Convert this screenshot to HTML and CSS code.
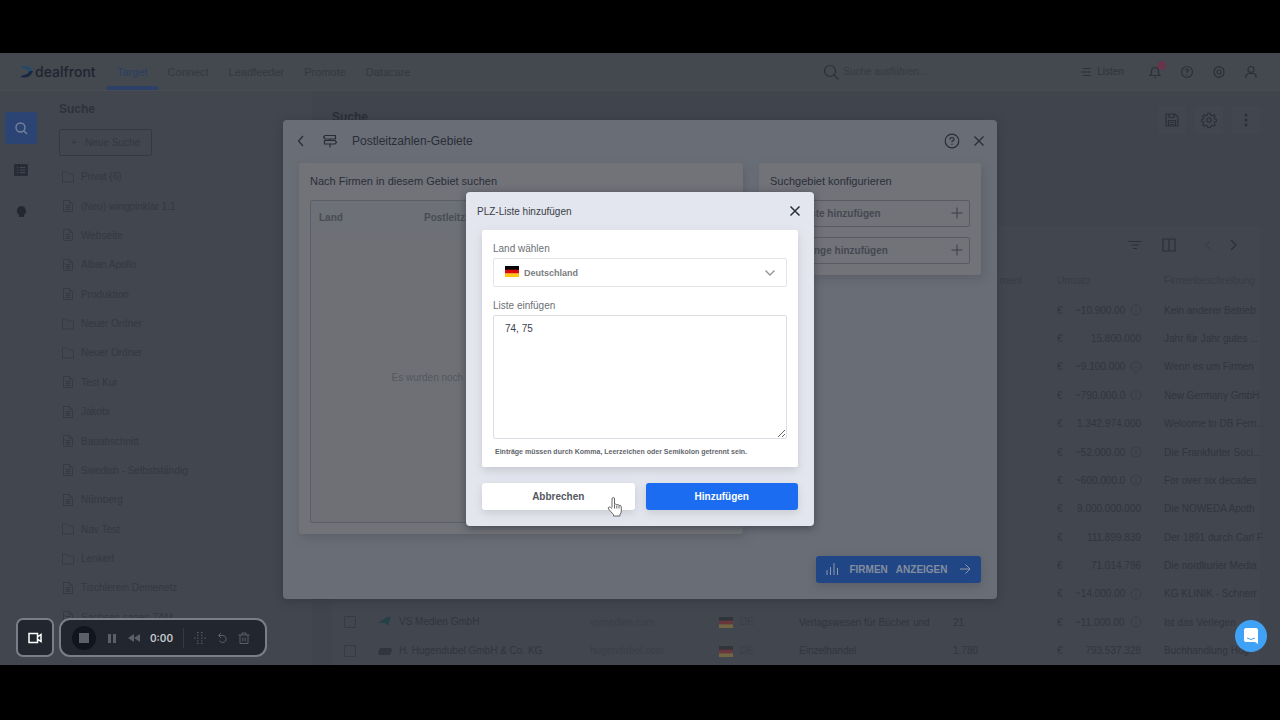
FILE: index.html
```html
<!DOCTYPE html>
<html lang="de">
<head>
    <meta charset="UTF-8">
    <meta name="viewport" content="width=device-width, initial-scale=1.0">
    <title>Dealfront - Target</title>
    <link rel="stylesheet" href="styles.css">
</head>
<body>
    <svg class="sprite" aria-hidden="true">
        <symbol id="i-folder" viewBox="0 0 14 14"><path d="M1.500 12V2h4l1.500 2h5.500v8z"/></symbol>
        <symbol id="i-doc" viewBox="0 0 14 14"><path d="M2.500 1.500h6l3 3v8h-9zM8.500 1.500v3h3M4.500 6.500h5M4.500 8.500h5M4.500 10.500h5M7 6.500v4"/></symbol>
        <symbol id="i-info" viewBox="0 0 14 14"><circle cx="7" cy="7" r="5"/><path d="M7 6v4M7 4v1"/></symbol>
        <symbol id="i-close" viewBox="0 0 14 14"><path d="M2.500 2.500l9 9M11.500 2.500l-9 9"/></symbol>
        <symbol id="i-plus" viewBox="0 0 14 14"><path d="M7 1.500v11M1.500 7h11"/></symbol>
        <symbol id="i-flag" viewBox="0 0 14 11"><path fill="#000" d="M0 0h14v4H0z"/><path fill="#d80a0a" d="M0 3.700h14v4H0z"/><path fill="#ffc61a" d="M0 7.400h14V11H0z"/></symbol>
    </svg>

    <div class="app">
        <header class="topbar">
            <a href="#" class="logo">
                <svg width="14" height="14" viewBox="0 0 14 14"><path fill="#22496b" d="M1 1h5q4 .5 7 5l-3 2Q7 3.500 3 3z"/><path fill="#1b2742" d="M13 6q-2 5.500-7 6.500H1q0-2 3-2.500 4-1 6-4z"/></svg>
                dealfront
            </a>
            <nav class="nav">
                <a href="#" class="active">Target</a>
                <a href="#">Connect</a>
                <a href="#">Leadfeeder</a>
                <a href="#">Promote</a>
                <a href="#">Datacare</a>
            </nav>
            <label class="search">
                <svg class="icon" width="16" height="16" viewBox="0 0 16 16"><circle cx="7" cy="7" r="5.500"/><path d="M11 11l4.500 4.500"/></svg>
                <input type="text" placeholder="Suche ausführen..." aria-label="Suche">
            </label>
            <div class="tools">
                <a href="#" class="lists"><svg class="icon" width="12" height="12" viewBox="0 0 12 12"><path d="M3 2.500h8M1 6h10M3 9.500h8"/></svg>Listen</a>
                <button class="bell" aria-label="Benachrichtigungen"><svg class="icon" width="14" height="14" viewBox="0 0 14 14"><path d="M2 10.500h10l-1.500-2V6a3.500 3.500 0 0 0-7 0v2.500zM6 12.500h2"/></svg><span class="badge"></span></button>
                <button aria-label="Hilfe"><svg class="icon" width="14" height="14" viewBox="0 0 14 14"><circle cx="7" cy="7" r="5.500"/><path d="M5.500 5.500q0-1.500 1.500-1.500t1.500 1.500L7 7v1M7 9.500v1"/></svg></button>
                <button aria-label="Einstellungen"><svg class="icon" width="14" height="14" viewBox="0 0 14 14"><path d="M4.500 2.500L7 1.500l2.500 1 2 1.500.5 3-.5 3-2 1.500-2.500 1-2.500-1-2-1.500L2 7l.5-3z"/><circle cx="7" cy="7" r="2"/></svg></button>
                <button aria-label="Konto"><svg class="icon" width="14" height="14" viewBox="0 0 14 14"><circle cx="7" cy="4.500" r="3"/><path d="M2 13V10.500l2-2h6l2 2V13"/></svg></button>
            </div>
        </header>

        <div class="workspace">
            <nav class="rail">
                <a href="#" class="active" aria-label="Suche"><svg width="14" height="14" viewBox="0 0 14 14"><circle cx="6.500" cy="6.500" r="4.500"/><path d="M10 10l3 3"/></svg></a>
                <a href="#" aria-label="Listen"><svg width="14" height="14" viewBox="0 0 14 14"><rect x="0" y="1" width="14" height="12" rx="1" fill="#282c36"/><path d="M3 4h1v1H3zM3 6.500h1v1H3zM3 9h1v1H3zM6 4h5v1H6zM6 6.500h5v1H6zM6 9h5v1H6z" fill="#454952"/></svg></a>
                <a href="#" aria-label="Ideen"><svg width="12" height="14" viewBox="0 0 12 14"><path fill="#242832" d="M6 1a5 5 0 0 1 3 9v2H4v-2a5 5 0 0 1 2-9z"/></svg></a>
            </nav>

            <aside class="sidebar">
                <h2>Suche</h2>
                <button class="new-search">+ &nbsp; Neue Suche</button>
                <ul>
                    <li><svg><use href="#i-folder"/></svg>Privat (6)</li>
                    <li><svg><use href="#i-doc"/></svg>(Neu) wingpinklar 1.1</li>
                    <li><svg><use href="#i-doc"/></svg>Webseite</li>
                    <li><svg><use href="#i-doc"/></svg>Alban Apollo</li>
                    <li><svg><use href="#i-doc"/></svg>Produktion</li>
                    <li><svg><use href="#i-folder"/></svg>Neuer Ordner</li>
                    <li><svg><use href="#i-folder"/></svg>Neuer Ordner</li>
                    <li><svg><use href="#i-doc"/></svg>Test Kur</li>
                    <li><svg><use href="#i-doc"/></svg>Jakobi</li>
                    <li><svg><use href="#i-doc"/></svg>Bauabschnitt</li>
                    <li><svg><use href="#i-doc"/></svg>Swedish - Selbstständig</li>
                    <li><svg><use href="#i-doc"/></svg>Nürnberg</li>
                    <li><svg><use href="#i-folder"/></svg>Nav Test</li>
                    <li><svg><use href="#i-folder"/></svg>Lenkert</li>
                    <li><svg><use href="#i-doc"/></svg>Tischlerein Demenetz</li>
                    <li><svg><use href="#i-doc"/></svg>Sachsen sagen TAM</li>
                </ul>
            </aside>

            <main class="results">
                <div class="results-head">
                    <h1>Suche</h1>
                    <div class="actions">
                        <button aria-label="Speichern"><svg class="icon" width="16" height="16" viewBox="0 0 16 16"><path d="M2 2h9l3 3v9H2zM5 2v3.500h5V2M4.500 14V8.500h7V14M6 10.500h4M6 12.500h4"/></svg></button>
                        <button aria-label="Optionen"><svg class="icon" width="16" height="16" viewBox="0 0 18 18"><path d="M7.500 1.500h3l.5 2 1.500.7 1.900-1.100 1.500 1.500-1 2 .6 1.400 2 .5v2l-2 .5-.6 1.400 1 2-1.500 1.500-1.900-1-1.500.6-.5 2h-3l-.5-2-1.500-.6-1.900 1-1.500-1.500 1-2L2.500 11l-2-.5v-2l2-.5.6-1.400-1-2 1.500-1.500 1.900 1.100L7 3.500z"/><circle cx="9" cy="9" r="2.500"/></svg></button>
                        <button aria-label="Mehr"><svg width="16" height="16" viewBox="0 0 16 16" fill="#2b2f39"><circle cx="8" cy="3" r="1.500"/><circle cx="8" cy="8" r="1.500"/><circle cx="8" cy="13" r="1.500"/></svg></button>
                    </div>
                </div>
                <div class="panel">
                    <div class="toolbar">
                        <button aria-label="Filter"><svg class="icon" width="14" height="14" viewBox="0 0 14 14"><path d="M.5 3.500h13M3 7h8M5 10.500h4"/></svg></button>
                        <button aria-label="Spalten"><svg class="icon" width="14" height="14" viewBox="0 0 14 14"><path d="M1 1h12v12H1zM7 1v12"/></svg></button>
                        <button class="prev" aria-label="Zurück"><svg class="icon" width="14" height="14" viewBox="0 0 14 14"><path d="M9 3L5 7l4 4"/></svg></button>
                        <button aria-label="Weiter"><svg class="icon" width="14" height="14" viewBox="0 0 14 14"><path d="M5 2l5 5-5 5"/></svg></button>
                    </div>
                    <div class="table-wrap">
                        <table>
                            <colgroup>
                                <col class="c-check"><col class="c-name"><col class="c-domain"><col class="c-land"><col class="c-branch"><col class="c-staff"><col class="c-cur"><col class="c-sales"><col class="c-info"><col>
                            </colgroup>
                            <thead>
                                <tr><th colspan="5"></th><th class="staff-head">ment</th><th colspan="3">Umsatz</th><th>Firmenbeschreibung</th></tr>
                            </thead>
                            <tbody>
                                <tr><td colspan="6"></td><td>€</td><td>~10.900.00</td><td><svg><use href="#i-info"/></svg></td><td>Kein anderer Betrieb</td></tr>
                                <tr><td colspan="6"></td><td>€</td><td colspan="2" class="num">15.800.000</td><td>Jahr für Jahr gutes ...</td></tr>
                                <tr><td colspan="6"></td><td>€</td><td>~9.100.000</td><td><svg><use href="#i-info"/></svg></td><td>Wenn es um Firmen</td></tr>
                                <tr><td colspan="6"></td><td>€</td><td>~790.000.0</td><td><svg><use href="#i-info"/></svg></td><td>New Germany GmbH</td></tr>
                                <tr><td colspan="6"></td><td>€</td><td colspan="2" class="num">1.342.974.000</td><td>Welcome to DB Fern...</td></tr>
                                <tr><td colspan="6"></td><td>€</td><td>~52.000.00</td><td><svg><use href="#i-info"/></svg></td><td>Die Frankfurter Soci...</td></tr>
                                <tr><td colspan="6"></td><td>€</td><td>~600.000.0</td><td><svg><use href="#i-info"/></svg></td><td>For over six decades</td></tr>
                                <tr><td colspan="6"></td><td>€</td><td colspan="2" class="num">9.000.000.000</td><td>Die NOWEDA Apoth</td></tr>
                                <tr><td colspan="6"></td><td>€</td><td colspan="2" class="num">111.899.839</td><td>Der 1891 durch Carl F</td></tr>
                                <tr><td colspan="6"></td><td>€</td><td colspan="2" class="num">71.014.796</td><td>Die nordkurier Media</td></tr>
                                <tr><td colspan="6"></td><td>€</td><td>~14.000.00</td><td><svg><use href="#i-info"/></svg></td><td>KG KLINIK - Schnerr</td></tr>
                                <tr><td><input type="checkbox" aria-label="VS Medien GmbH"></td><td><svg class="brand"><path d="M0 8l9-6h4l-3 9-3-3z"/></svg>VS Medien GmbH</td><td class="faint">vsmedien.com</td><td class="faint"><svg class="flag"><use href="#i-flag"/></svg>DE</td><td>Verlagswesen für Bücher und</td><td>21</td><td>€</td><td>~11.000.00</td><td><svg><use href="#i-info"/></svg></td><td>Ist das Verlegen</td></tr>
                                <tr><td><input type="checkbox" aria-label="H. Hugendubel GmbH &amp; Co. KG"></td><td><svg class="brand dark"><path d="M0 9l2-5h11l1 2-2 5H1z"/></svg>H. Hugendubel GmbH &amp; Co. KG</td><td class="faint">hugendubel.com</td><td class="faint"><svg class="flag"><use href="#i-flag"/></svg>DE</td><td>Einzelhandel</td><td>1.780</td><td>€</td><td colspan="2" class="num">793.537.328</td><td>Buchhandlung Hug</td></tr>
                            </tbody>
                        </table>
                    </div>
                </div>
            </main>
        </div>

        <!-- area picker -->
        <div class="overlay">
            <section class="modal">
                <header>
                    <button aria-label="Zurück"><svg class="icon" width="14" height="14" viewBox="0 0 14 14"><path d="M9 2L4.500 7 9 12"/></svg></button>
                    <svg class="icon" width="14" height="14" viewBox="0 0 14 14"><path d="M2 1.500h10.500v3.500H2L.5 3.200zM1.500 6.500H12l1.500 1.800L12 10H1.500zM7 5v1.500M7 10v3.500"/></svg>
                    <h2>Postleitzahlen-Gebiete</h2>
                    <button aria-label="Hilfe"><svg class="icon" width="16" height="16" viewBox="0 0 16 16"><circle cx="8" cy="8" r="6.800"/><path d="M6 6.500Q6 4.500 8 4.500t2 2Q10 7.500 8 8.300v1M8 10.800v1"/></svg></button>
                    <button aria-label="Schließen"><svg class="icon" width="14" height="14"><use href="#i-close"/></svg></button>
                </header>
                <div class="columns">
                    <div class="card">
                        <h3>Nach Firmen in diesem Gebiet suchen</h3>
                        <div class="area-list">
                            <div class="area-head"><span>Land</span><span>Postleitzahl</span></div>
                            <p>Es wurden noch keine Postleitzahlen-Gebiete hinzugefügt.</p>
                        </div>
                    </div>
                    <div class="card">
                        <h3>Suchgebiet konfigurieren</h3>
                        <button class="add">PLZ-Liste hinzufügen<svg width="14" height="14"><use href="#i-plus"/></svg></button>
                        <button class="add">PLZ-Range hinzufügen<svg width="14" height="14"><use href="#i-plus"/></svg></button>
                    </div>
                </div>
                <footer>
                    <button class="show"><svg width="14" height="14" viewBox="0 0 14 14"><path d="M2 8v5M5.500 5v8M9 1v12M12.500 6v7"/></svg><span>FIRMEN</span><span>ANZEIGEN</span><svg width="14" height="14" viewBox="0 0 14 14"><path d="M2 7h10M7.500 2.500L12 7l-4.500 4.500"/></svg></button>
                </footer>
            </section>
        </div>

        <!-- add a list of postcodes -->
        <div class="overlay">
            <form class="dialog">
                <header>
                    <h2>PLZ-Liste hinzufügen</h2>
                    <button type="button" aria-label="Schließen"><svg class="icon" width="14" height="14"><use href="#i-close"/></svg></button>
                </header>
                <div class="fields">
                    <label for="land">Land wählen</label>
                    <div class="select">
                        <select id="land"><option>Deutschland</option></select>
                        <svg class="flag"><use href="#i-flag"/></svg>
                        <svg class="chevron" width="12" height="12" viewBox="0 0 12 12"><path d="M1.500 3.500L6 8l4.500-4.500"/></svg>
                    </div>
                    <label for="liste">Liste einfügen</label>
                    <textarea id="liste">74, 75</textarea>
                    <small>Einträge müssen durch Komma, Leerzeichen oder Semikolon getrennt sein.</small>
                </div>
                <div class="buttons">
                    <button type="button">Abbrechen</button>
                    <button type="button" class="primary">Hinzufügen</button>
                </div>
                <svg class="cursor" width="16" height="22" viewBox="0 0 16 22"><path d="M5 11.500V3q0-1.500 1.300-1.500T7.500 3v5.500q1.200-1 2.300.3 1.200-.8 2.200.5 2-.3 2.300 1.700v4q0 2-1.300 3.500v1.500H6.500v-1.500Q4 16 1.500 13q-.8-1.600.7-2 1.300-.2 2.800 1.700M7.500 9v3.500M9.800 9.500v3M12 10v2.500" fill="#fff" stroke="#666" stroke-width="1"/></svg>
            </form>
        </div>

        <div class="recorder">
            <button class="camera" aria-label="Kamera"><svg width="14" height="12" viewBox="0 0 14 12"><path d="M1 1.500h8.500v9H1zM9.500 5L13 2.500v7L9.500 7" fill="none" stroke="#fff" stroke-width="1.500"/></svg></button>
            <div class="record-bar">
                <button class="stop" aria-label="Stopp"><svg width="12" height="12"><path d="M1 1h10v10H1z"/></svg></button>
                <button aria-label="Pause"><svg width="12" height="12"><path d="M2 2h3v9H2zM7 2h3v9H7z"/></svg></button>
                <button aria-label="Zurückspulen"><svg width="12" height="12"><path d="M6 2v8L0 6zM12 2v8L6 6z"/></svg></button>
                <time>0:00</time>
                <i></i>
                <button aria-label="Effekte"><svg width="12" height="12"><path class="dots" d="M0 6h1.500M3 3h1.500M3 6h1.500M3 9h1.500M7 3h1.500M7 6h1.500M7 9h1.500M10.500 6H12M3 .5h1.500M7 .5h1.500M3 11.500h1.500M7 11.500h1.500"/></svg></button>
                <button aria-label="Neu starten"><svg width="12" height="12"><path class="line" d="M2.500 3.500H7a3.500 3.500 0 1 1-3.500 5M5 1L2.500 3.500 5 6"/></svg></button>
                <button aria-label="Löschen"><svg width="12" height="12"><path class="line" d="M.5 3h11M4 3V1h4v2M2 3v8.500h8V3M4.800 5.500v4M7.200 5.500v4"/></svg></button>
            </div>
        </div>
        <button class="chat" aria-label="Chat"><svg width="16" height="18" viewBox="0 0 16 18"><path fill="#fff" d="M3 1h10q2 0 2 2v14l-3-2H3q-2 0-2-2V3q0-2 2-2z"/><path d="M4 11q4 3 8 0" fill="none" stroke="#40a2f6"/></svg></button>
    </div>
</body>
</html>
```
FILE: styles.css
```css
* {
    box-sizing: border-box;
}
body {
    margin: 0;
    height: 100vh;
    padding: 53px 0 55px;
    background: #000;
    font-family: "Liberation Sans", Arial, sans-serif;
    font-size: 10px;
    color: #30343e;
}
h1, h2, h3, p, ul {
    margin: 0;
    padding: 0;
}
a {
    color: inherit;
    text-decoration: none;
}
button, input, select, textarea {
    font: inherit;
    color: inherit;
}
button {
    border: 0;
    padding: 0;
    background: none;
    display: flex;
    align-items: center;
    justify-content: center;
}
svg {
    flex: none;
}
.sprite {
    display: none;
}
.icon {
    fill: none;
    stroke: #2b2f39;
    stroke-width: 1.2;
}
.flag {
    width: 14px;
    height: 11px;
}
.app {
    position: relative;
    height: 100%;
    overflow: hidden;
    display: flex;
    flex-direction: column;
    background: #42464f;
}

/* top bar */
.topbar {
    height: 38px;
    flex: none;
    display: flex;
    align-items: center;
    padding: 0 22px 0 20px;
    background: #44484f;
    border-bottom: 1px solid #484c54;
}
.logo {
    display: flex;
    align-items: center;
    gap: 1px;
    width: 87px;
    font-family: Inter, sans-serif;
    font-size: 14px;
    font-weight: 500;
    color: #20242f;
}
.nav {
    display: flex;
    align-self: stretch;
}
.nav a {
    display: flex;
    align-items: center;
    padding: 0 10px;
    font-size: 11px;
    color: #343842;
}
.nav .active {
    color: #2b3f62;
    border-bottom: 4px solid #2c4068;
    border-top: 4px solid transparent;
}
.search {
    display: flex;
    align-items: center;
    gap: 4px;
    margin-left: auto;
}
.search input {
    width: 110px;
    padding: 0;
    border: 0;
    background: none;
}
.search input::placeholder {
    color: #373b44;
}
.tools {
    display: flex;
    align-items: center;
    gap: 18px;
    margin-left: 127px;
}
.lists {
    display: flex;
    align-items: center;
    gap: 5px;
    margin-right: 6px;
}
.bell {
    position: relative;
}
.badge {
    position: absolute;
    top: -4px;
    right: -4px;
    width: 9px;
    height: 9px;
    border-radius: 50%;
    background: #65364a;
}

/* left side */
.workspace {
    flex: 1;
    min-height: 0;
    display: flex;
}
.rail {
    width: 42px;
    flex: none;
    display: flex;
    flex-direction: column;
    align-items: center;
    gap: 10px;
    padding-top: 21px;
}
.rail a {
    width: 32px;
    height: 32px;
    border-radius: 3px;
    display: flex;
    align-items: center;
    justify-content: center;
}
.rail .active {
    background: #2b4474;
}
.rail .active svg {
    fill: none;
    stroke: #75829c;
    stroke-width: 1.4;
}
.sidebar {
    width: 270px;
    flex: none;
    display: flex;
    flex-direction: column;
    padding: 10px 17px 33px;
    color: #343842;
}
.sidebar h2 {
    font-size: 12px;
    line-height: 16px;
    font-weight: 600;
    color: #2e323c;
}
.new-search {
    align-self: flex-start;
    width: 93px;
    height: 27px;
    margin: 12px 0 6px;
    border: 1px solid #353943;
    border-radius: 2px;
}
.sidebar ul {
    flex: 1;
    display: grid;
    grid-auto-rows: 1fr;
    list-style: none;
}
.sidebar li {
    display: flex;
    align-items: center;
    gap: 6px;
    padding-left: 2px;
}
.sidebar li svg {
    width: 14px;
    height: 14px;
    fill: none;
    stroke: #363a44;
}

/* results */
.results {
    flex: 1;
    min-width: 0;
    display: flex;
    flex-direction: column;
    padding: 12px 20px 0;
    background: #40444d;
}
.results-head {
    display: flex;
    justify-content: space-between;
}
.results h1 {
    font-size: 12px;
    line-height: 28px;
    font-weight: 600;
    color: #292d37;
}
.actions {
    display: flex;
    gap: 9px;
    padding-top: 3px;
}
.actions button {
    width: 28px;
    height: 28px;
    background: #42464e;
}
.panel {
    flex: 1;
    min-height: 0;
    display: flex;
    flex-direction: column;
    margin-top: 92px;
    background: #42464f;
}
.toolbar {
    display: flex;
    justify-content: flex-end;
    gap: 20px;
    padding: 12px 20px;
}
.toolbar .prev {
    margin: 0 -9px 0 5px;
    opacity: .3;
}
.table-wrap {
    flex: 1;
    min-height: 0;
}
table {
    width: 100%;
    height: 100%;
    table-layout: fixed;
    border-collapse: collapse;
    color: #31353f;
}
th {
    height: 32px;
    padding: 0;
    font-weight: 400;
    text-align: left;
    white-space: nowrap;
    color: #383c45;
}
td {
    height: 28px;
    padding: 0;
    white-space: nowrap;
}
.num {
    text-align: right;
    padding-right: 23px;
}
.staff-head {
    text-align: right;
    padding-right: 35px;
}
.faint {
    color: #3a3e48;
}
.c-check { width: 46px; }
.c-name { width: 212px; }
.c-domain { width: 129px; }
.c-land { width: 80px; }
.c-branch { width: 154px; }
.c-staff { width: 104px; }
.c-cur { width: 18px; }
.c-sales { width: 54px; }
.c-info { width: 35px; }
td svg {
    width: 14px;
    height: 14px;
    vertical-align: middle;
    fill: none;
    stroke: #383c46;
}
td .flag {
    width: 14px;
    height: 11px;
    margin-right: 7px;
    stroke: none;
    opacity: .25;
}
td .brand {
    margin-right: 7px;
    fill: #28404a;
    stroke: none;
}
td .dark {
    fill: #31353e;
}
td input {
    appearance: none;
    display: block;
    width: 12px;
    height: 12px;
    margin: 0 0 0 12px;
    border: 1px solid #363a43;
    border-radius: 1px;
}

/* area picker */
.overlay {
    position: absolute;
    inset: 0;
    display: flex;
    align-items: center;
    justify-content: center;
}
.modal {
    width: 714px;
    max-width: 100%;
    padding: 0 16px 16px;
    border-radius: 4px;
    background: #696d76;
    box-shadow: 0 2px 8px #363a43;
}
.modal header {
    display: flex;
    align-items: center;
    gap: 15px;
    height: 43px;
    margin: 0 -5px;
}
.modal h2 {
    flex: 1;
    font-size: 12px;
    font-weight: 400;
    color: #2a2e38;
}
.modal header .icon {
    stroke: #282c36;
}
.modal header > button:last-child {
    margin-left: -3px;
}
.columns {
    display: grid;
    grid-template-columns: 2fr 1fr;
    gap: 16px;
    align-items: start;
}
.card {
    padding: 11px;
    border-radius: 3px;
    background: #717379;
    box-shadow: 2px 4px 8px #5d6169;
}
.card h3 {
    margin-bottom: 11px;
    font-size: 11px;
    line-height: 15px;
    font-weight: 400;
    color: #2a2e38;
}
.area-list {
    min-height: 323px;
    border: 1px solid #5a5e66;
    border-radius: 2px;
    background: #6e7075;
}
.area-head {
    display: grid;
    grid-template-columns: 26% 1fr;
    padding: 0 8px;
    line-height: 33px;
    font-weight: 600;
    color: #484c54;
    background: #6d7077;
}
.area-list p {
    padding-top: 138px;
    text-align: center;
    color: #54575e;
}
.add {
    width: 100%;
    height: 27px;
    justify-content: space-between;
    padding: 0 5px 0 8px;
    border: 1px solid #585b62;
    border-radius: 2px;
    font-weight: 600;
    color: #454850;
}
.add + .add {
    margin-top: 10px;
}
.add svg {
    stroke: #3c3f48;
}
.modal footer {
    display: flex;
    justify-content: flex-end;
    margin-top: 22px;
}
.show {
    width: 165px;
    height: 27px;
    gap: 8px;
    border-radius: 3px;
    background: #204685;
    box-shadow: 0 3px 8px #5a5e65;
    font-weight: 700;
    color: #848d9f;
}
.show svg {
    fill: none;
    stroke: #8f98aa;
}
.show svg:first-child {
    margin-right: 2px;
}
.show svg:last-child {
    margin-left: 2px;
}

/* dialog */
.dialog {
    position: relative;
    width: 348px;
    padding: 0 16px 16px;
    border-radius: 4px;
    background: #e3e6ee;
    box-shadow: 0 2px 8px #44474f;
}
.dialog header {
    display: flex;
    align-items: center;
    justify-content: space-between;
    height: 38px;
    margin: 0 -5px;
}
.dialog h2 {
    font-size: 10px;
    font-weight: 400;
    color: #3a3e47;
}
.dialog header button {
    margin-right: 1px;
}
.dialog header .icon {
    stroke-width: 1.5;
}
.fields {
    display: flex;
    flex-direction: column;
    padding: 11px 11px 8px;
    border-radius: 2px;
    background: #fff;
    box-shadow: 0 4px 8px #c8cbd2;
}
.fields label {
    line-height: 15px;
    margin-bottom: 2px;
    color: #6c6f74;
}
.select {
    position: relative;
    margin-bottom: 11px;
}
.select select {
    display: block;
    appearance: none;
    width: 100%;
    height: 29px;
    padding: 0 30px;
    border: 1px solid #e2e4e8;
    border-radius: 2px;
    background: #fff;
    font-size: 9px;
    font-weight: 600;
    color: #7a7c80;
}
.select .flag {
    position: absolute;
    left: 12px;
    top: 8px;
    pointer-events: none;
}
.chevron {
    position: absolute;
    right: 11px;
    top: 9px;
    fill: none;
    stroke: #939599;
    stroke-width: 1.4;
    pointer-events: none;
}
.fields textarea {
    height: 124px;
    padding: 7px 11px;
    border: 1px solid #dcdee3;
    border-radius: 2px;
    resize: vertical;
    color: #3a3e47;
}
.fields small {
    padding: 6px 2px 0;
    font-size: 7px;
    line-height: 14px;
    font-weight: 600;
    color: #63666c;
}
.buttons {
    display: grid;
    grid-template-columns: 1fr 1fr;
    gap: 11px;
    margin-top: 16px;
}
.buttons button {
    height: 27px;
    border-radius: 3px;
    background: #fff;
    box-shadow: 0 3px 8px #c8cbd2;
    font-weight: 600;
    color: #55585f;
}
.buttons .primary {
    background: #1b6cf0;
    color: #fff;
}
.cursor {
    position: absolute;
    right: 191px;
    bottom: 8px;
}

/* screen recorder */
.recorder {
    position: absolute;
    left: 16px;
    bottom: 8px;
    display: flex;
    align-items: center;
    gap: 5px;
}
.camera, .record-bar {
    height: 39px;
    border: 2px solid #7a7e88;
    background: #22262f;
}
.camera {
    width: 38px;
    border-radius: 7px;
}
.record-bar {
    display: flex;
    align-items: center;
    gap: 10px;
    padding: 0 15px 0 11px;
    border-radius: 11px;
}
.record-bar svg {
    fill: #5c5f68;
    overflow: visible;
}
.record-bar .line, .record-bar .dots {
    fill: none;
    stroke: #5c5f68;
}
.stop {
    width: 24px;
    height: 24px;
    border-radius: 50%;
    background: #11151d;
}
.record-bar time {
    font-family: Inter, sans-serif;
    font-weight: 600;
    color: #c6c8cc;
}
.record-bar i {
    width: 1px;
    height: 20px;
    background: #353943;
}
.chat {
    position: absolute;
    right: 13px;
    bottom: 13px;
    width: 32px;
    height: 32px;
    border-radius: 50%;
    background: #40a2f6;
}
```
